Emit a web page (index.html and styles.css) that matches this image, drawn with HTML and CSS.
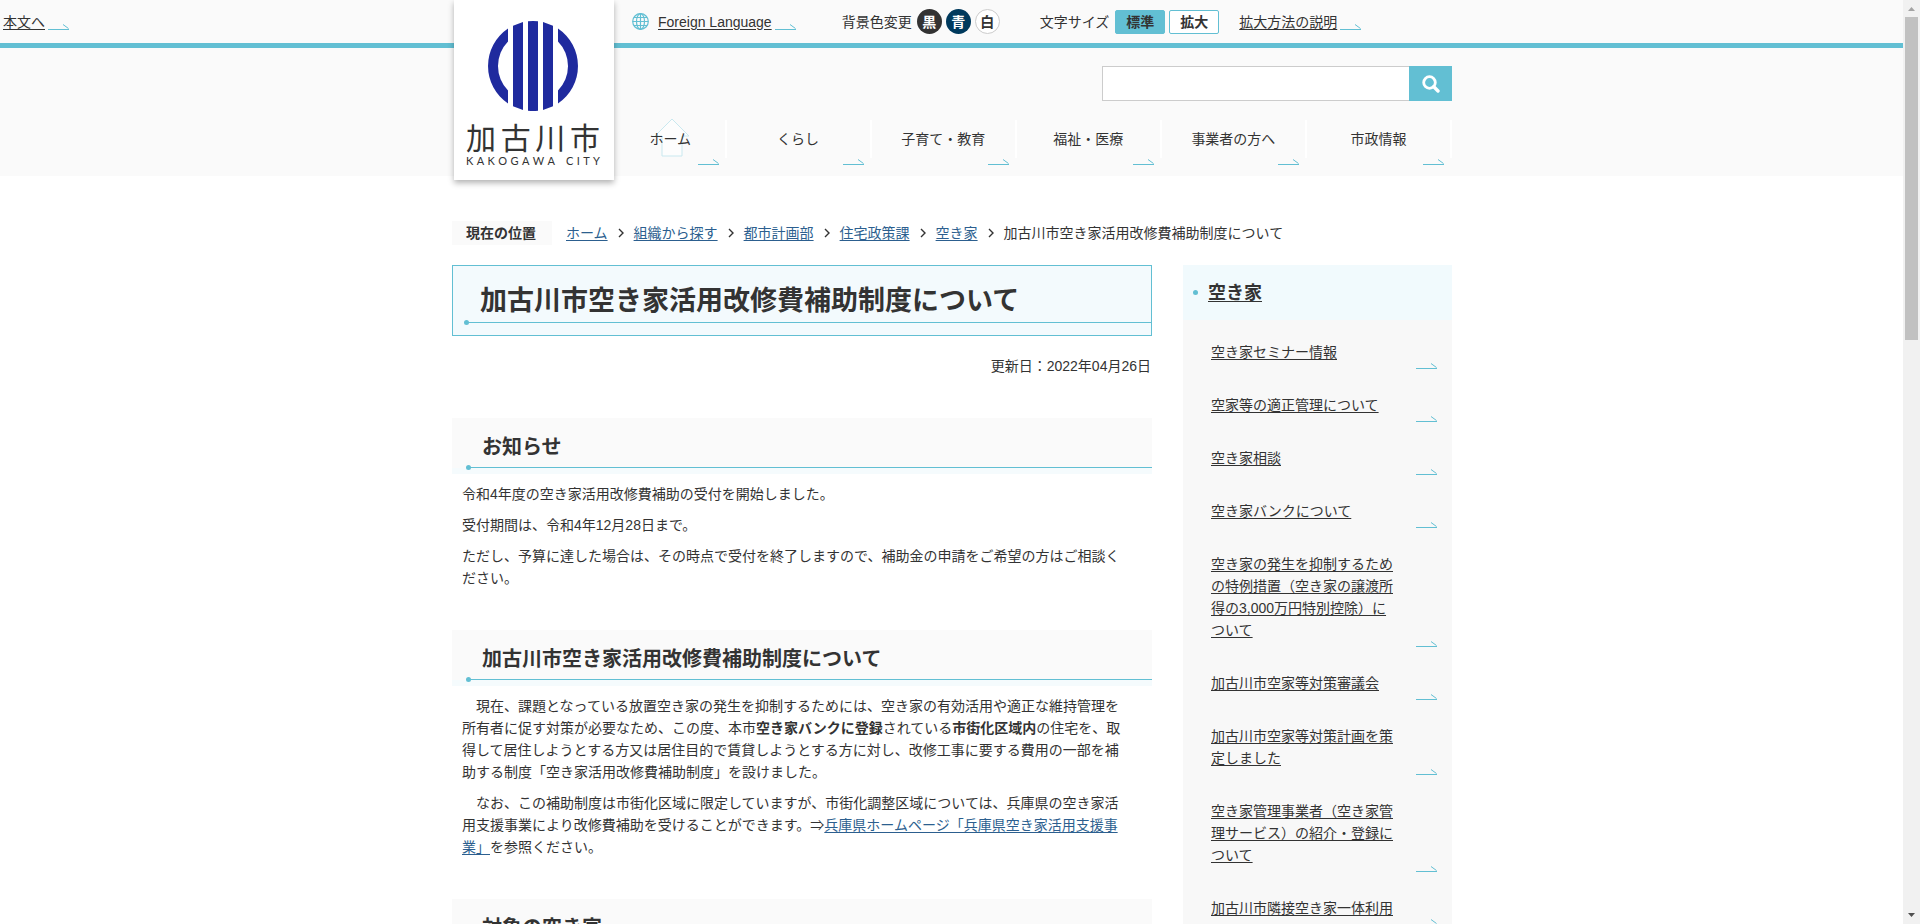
FILE: index.html
```html
<!DOCTYPE html>
<html lang="ja">
<head>
<meta charset="utf-8">
<title>加古川市空き家活用改修費補助制度について</title>
<link rel="stylesheet" href="styles.css">
</head>
<body>
<svg class="defs" aria-hidden="true">
  <symbol id="arrow" viewBox="0 0 21 6"><path d="M0 5.5H21M15 .5L20.5 4.5" fill="none" stroke="#62bfd3"/></symbol>
  <symbol id="chevron" viewBox="0 0 6 10"><path d="M1 1L5 5L1 9" fill="none" stroke="#333" stroke-width="1.4"/></symbol>
</svg>

<header class="header">
  <div class="topbar">
    <a class="skip tool-link" href="#main">本文へ<svg class="arrow"><use href="#arrow"/></svg></a>
    <div class="tools">
      <div class="tool-group language">
        <svg class="globe" viewBox="0 0 17 17" fill="none" stroke="#62bfd3" stroke-width="1.2"><circle cx="8.5" cy="8.5" r="7.8"/><ellipse cx="8.5" cy="8.5" rx="4" ry="7.8"/><path d="M8.5 .7V16.3M.7 8.5H16.3M2 4.5H15M2 12.5H15"/></svg>
        <a class="tool-link" href="#language"><span>Foreign Language</span><svg class="arrow"><use href="#arrow"/></svg></a>
      </div>
      <div class="tool-group background">
        <span class="tool-label">背景色変更</span>
        <div class="button-row">
          <button class="round black" type="button">黒</button>
          <button class="round blue" type="button">青</button>
          <button class="round white" type="button">白</button>
        </div>
      </div>
      <div class="tool-group size">
        <span class="tool-label">文字サイズ</span>
        <div class="button-row">
          <button class="size-button current" type="button">標準</button>
          <button class="size-button" type="button">拡大</button>
        </div>
      </div>
      <a class="tool-link" href="#zoom-help"><span>拡大方法の説明</span><svg class="arrow"><use href="#arrow"/></svg></a>
    </div>
  </div>

  <div class="container masthead">
    <a class="logo" href="#home" aria-label="加古川市">
      <svg class="emblem" viewBox="0 0 90 90" fill="#1f2a9e">
        <path d="M20 7.6A45 45 0 0 0 20 82.4V69.5A35 35 0 0 1 20 20.5Z"/>
        <path d="M70 7.6A45 45 0 0 1 70 82.4V69.5A35 35 0 0 0 70 20.5Z"/>
        <path d="M25 4.7L35 1.1V88.9L25 85.3ZM40 .3Q45 -.2 50 .3V89.7Q45 90.2 40 89.7ZM55 1.1L65 4.7V85.3L55 88.9Z"/>
      </svg>
      <span class="city"><span>加</span><span>古</span><span>川</span><span>市</span></span>
      <span class="romaji"><span>K</span><span>A</span><span>K</span><span>O</span><span>G</span><span>A</span><span>W</span><span>A</span><span class="space"></span><span>C</span><span>I</span><span>T</span><span>Y</span></span>
    </a>
    <form class="search">
      <input class="search-box" type="text" aria-label="サイト内検索">
      <button class="search-button" type="button" aria-label="検索"><svg viewBox="0 0 18 18" fill="none" stroke="#fff"><circle cx="7.5" cy="7.5" r="5.8" stroke-width="2.8"/><path d="M11.8 11.8L16 16" stroke-width="3.4" stroke-linecap="round"/></svg></button>
    </form>
    <nav class="nav">
      <a class="nav-item home" href="#home"><svg class="house" viewBox="0 0 38 39"><path d="M19 1L36 18H29V38H9V18H2Z" fill="#fdfdfd" stroke="#c9e8ef"/></svg><span>ホーム</span><svg class="arrow"><use href="#arrow"/></svg></a>
      <a class="nav-item" href="#life"><span>くらし</span><svg class="arrow"><use href="#arrow"/></svg></a>
      <a class="nav-item" href="#children"><span>子育て・教育</span><svg class="arrow"><use href="#arrow"/></svg></a>
      <a class="nav-item" href="#welfare"><span>福祉・医療</span><svg class="arrow"><use href="#arrow"/></svg></a>
      <a class="nav-item" href="#business"><span>事業者の方へ</span><svg class="arrow"><use href="#arrow"/></svg></a>
      <a class="nav-item" href="#government"><span>市政情報</span><svg class="arrow"><use href="#arrow"/></svg></a>
    </nav>
  </div>
</header>

<div class="container">
  <nav class="breadcrumb" aria-label="現在の位置">
    <strong class="breadcrumb-label">現在の位置</strong>
    <ol class="crumbs">
      <li><a href="#home">ホーム</a><svg class="chevron"><use href="#chevron"/></svg></li>
      <li><a href="#organization">組織から探す</a><svg class="chevron"><use href="#chevron"/></svg></li>
      <li><a href="#city-planning">都市計画部</a><svg class="chevron"><use href="#chevron"/></svg></li>
      <li><a href="#housing">住宅政策課</a><svg class="chevron"><use href="#chevron"/></svg></li>
      <li><a href="#akiya">空き家</a><svg class="chevron"><use href="#chevron"/></svg></li>
      <li>加古川市空き家活用改修費補助制度について</li>
    </ol>
  </nav>

  <div class="columns">
    <main class="main" id="main">
      <h1 class="title"><span>加古川市空き家活用改修費補助制度について</span></h1>
      <p class="updated">更新日：2022年04月26日</p>

      <section class="section">
        <h2 class="heading"><span>お知らせ</span></h2>
        <p>令和4年度の空き家活用改修費補助の受付を開始しました。</p>
        <p>受付期間は、令和4年12月28日まで。</p>
        <p>ただし、予算に達した場合は、その時点で受付を終了しますので、補助金の申請をご希望の方はご相談ください。</p>
      </section>

      <section class="section">
        <h2 class="heading"><span>加古川市空き家活用改修費補助制度について</span></h2>
        <p>　現在、課題となっている放置空き家の発生を抑制するためには、空き家の有効活用や適正な維持管理を所有者に促す対策が必要なため、この度、本市<strong>空き家バンクに登録</strong>されている<strong>市街化区域内</strong>の住宅を、取得して居住しようとする方又は居住目的で賃貸しようとする方に対し、改修工事に要する費用の一部を補助する制度「空き家活用改修費補助制度」を設けました。</p>
        <p>　なお、この補助制度は市街化区域に限定していますが、市街化調整区域については、兵庫県の空き家活用支援事業により改修費補助を受けることができます。⇒<a href="#hyogo">兵庫県ホームページ「兵庫県空き家活用支援事業」</a>を参照ください。</p>
      </section>

      <section class="section">
        <h2 class="heading"><span>対象の空き家</span></h2>
      </section>
    </main>

    <aside class="side">
      <h2 class="side-title"><a href="#akiya">空き家</a></h2>
      <ul class="side-list">
        <li><a href="#s1">空き家セミナー情報</a><svg class="arrow"><use href="#arrow"/></svg></li>
        <li><a href="#s2">空家等の適正管理について</a><svg class="arrow"><use href="#arrow"/></svg></li>
        <li><a href="#s3">空き家相談</a><svg class="arrow"><use href="#arrow"/></svg></li>
        <li><a href="#s4">空き家バンクについて</a><svg class="arrow"><use href="#arrow"/></svg></li>
        <li><a href="#s5">空き家の発生を抑制するための特例措置（空き家の譲渡所得の3,000万円特別控除）について</a><svg class="arrow"><use href="#arrow"/></svg></li>
        <li><a href="#s6">加古川市空家等対策審議会</a><svg class="arrow"><use href="#arrow"/></svg></li>
        <li><a href="#s7">加古川市空家等対策計画を策定しました</a><svg class="arrow"><use href="#arrow"/></svg></li>
        <li><a href="#s8">空き家管理事業者（空き家管理サービス）の紹介・登録について</a><svg class="arrow"><use href="#arrow"/></svg></li>
        <li><a href="#s9">加古川市隣接空き家一体利用</a><svg class="arrow"><use href="#arrow"/></svg></li>
      </ul>
    </aside>
  </div>
</div>

<div class="scrollbar" aria-hidden="true">
  <svg viewBox="0 0 17 17"><path d="M5 11L8.5 7L12 11Z" fill="#a3a3a3"/></svg>
  <div class="thumb"></div>
  <svg class="down" viewBox="0 0 17 17"><path d="M5 6L8.5 10L12 6Z" fill="#505050"/></svg>
</div>
</body>
</html>
```

FILE: styles.css
```css
* { box-sizing: border-box; }

body {
  margin: 0;
  padding-right: 16px;
  height: 100vh;
  overflow: hidden;
  background: #fff;
  color: #333;
  font-family: "Liberation Sans", "Noto Sans CJK JP", sans-serif;
  font-size: 14px;
  line-height: 22px;
  text-spacing-trim: space-all;
}

a { color: #333; text-underline-offset: 2px; }
p, h1, h2, ul, ol { margin: 0; padding: 0; }
ul, ol { list-style: none; }
button, input { font: inherit; color: inherit; padding: 0; }

.defs { position: absolute; width: 0; height: 0; }
.arrow { display: block; flex: none; width: 21px; height: 6px; }
.container { max-width: 1000px; margin: 0 auto; }

/* Header */
.header { background: #fafafa; }

.topbar {
  display: grid;
  grid-template-columns: 1fr minmax(0, 1000px) 1fr;
  align-items: center;
  height: 48px;
  border-bottom: 5px solid #62bfd3;
}

.tools, .tool-group, .button-row { display: flex; align-items: center; }
.tools { padding-left: 180px; white-space: nowrap; }
.tool-link { display: flex; align-items: center; gap: 3px; }
.tool-link .arrow { align-self: flex-end; margin-bottom: 3px; }
.skip { padding-left: 3px; }
.language { gap: 9px; margin-right: 46px; }
.globe { width: 17px; height: 17px; }
.background { gap: 5px; margin-right: 40px; }
.size { gap: 6px; margin-right: 20px; }
.button-row { gap: 4px; }

.round {
  width: 25px;
  height: 25px;
  border: 1px solid transparent;
  border-radius: 50%;
  font-weight: bold;
  line-height: 22px;
}
.black { background: #333; color: #fff; }
.blue { background: #003a5d; color: #fff; }
.white { background: #fff; border-color: #ccc; }

.size-button {
  width: 50px;
  height: 24px;
  border: 1px solid #62bfd3;
  border-radius: 2px;
  background: #fff;
  font-weight: bold;
  line-height: 22px;
}
.current { background: #62bfd3; }

.masthead { position: relative; height: 128px; padding-top: 18px; }

.logo {
  position: absolute;
  top: -48px;
  left: 2px;
  display: flex;
  flex-direction: column;
  width: 160px;
  height: 180px;
  padding: 21px 14px 0 12px;
  background: #fff;
  box-shadow: 0 3px 6px rgba(0, 0, 0, .3);
  text-decoration: none;
}
.emblem { width: 90px; height: 90px; margin: 0 auto 12px; }
.city, .romaji { display: flex; justify-content: space-between; }
.city { font-size: 30px; line-height: 32px; }
.romaji { font-family: Lato, sans-serif; font-size: 11px; line-height: 12px; }
.space { width: 4px; }

.search { display: flex; justify-content: flex-end; }
.search-box {
  width: 307px;
  height: 35px;
  padding: 0 8px;
  border: 1px solid #ccc;
  border-right: 0;
  background: #fff;
}
.search-button {
  display: grid;
  place-items: center;
  width: 43px;
  height: 35px;
  border: 0;
  background: #62bfd3;
}
.search-button svg { width: 18px; height: 18px; }

.nav { display: flex; margin: 19px 0 0 164px; }
.nav-item {
  position: relative;
  flex: 145;
  height: 38px;
  border-right: 2px solid #fff;
  line-height: 38px;
  text-align: center;
  text-decoration: none;
}
.nav-item span { position: relative; }
.nav-item .arrow { position: absolute; right: 6px; bottom: -7px; }
.home { flex: 110; }
.house { position: absolute; top: -2px; left: 50%; width: 38px; height: 39px; margin-left: -17px; }

/* Breadcrumb */
.breadcrumb { display: flex; gap: 14px; margin: 45px 0 20px; line-height: 24px; }
.breadcrumb-label { width: 100px; background: #fafafa; padding-left: 14px; }
.crumbs { display: flex; }
.crumbs li { display: flex; align-items: center; }
.crumbs a, .section a { color: #2c5f8f; }
.chevron { width: 6px; height: 10px; margin: 0 10px; }

/* Columns */
.columns {
  display: grid;
  grid-template-columns: minmax(0, 1fr) 269px;
  gap: 31px;
  align-items: start;
}

.title {
  height: 71px;
  padding-left: 13px;
  border: 1px solid #62bfd3;
  background: #f3fafd;
  font-size: 27px;
  line-height: 34px;
}
.title span, .heading span { position: relative; display: block; border-bottom: 1px solid #62bfd3; }
.title span { padding: 18px 14px 4px; }
.title span::after, .heading span::after {
  content: "";
  position: absolute;
  bottom: -3px;
  left: -2px;
  width: 5px;
  height: 5px;
  border-radius: 50%;
  background: #62bfd3;
}
.updated { margin: 19px 1px 41px; text-align: right; }

.section { margin-bottom: 41px; }
.section p { margin: 9px 26px 0 10px; }
.heading {
  padding: 0 0 6px 16px;
  background: linear-gradient(to top, #f5fbfd 6px, #fafafa 6px);
  font-size: 20px;
  line-height: 30px;
}
.heading span { padding: 14px 14px 5px; }

/* Sidebar */
.side { background: #f8f8f8; }
.side-title {
  display: flex;
  align-items: center;
  gap: 10px;
  height: 55px;
  padding-left: 10px;
  background: #f1fafd;
  font-size: 18px;
}
.side-title::before {
  content: "";
  width: 5px;
  height: 5px;
  border-radius: 50%;
  background: #62bfd3;
}
.side-list { padding: 21px 15px 0 28px; }
.side-list li { display: flex; flex-direction: column; align-items: flex-start; padding-bottom: 25px; }
.side-list a { max-width: 186px; }
.side-list .arrow { align-self: flex-end; }

/* Scrollbar */
.scrollbar {
  position: fixed;
  top: 0;
  right: 0;
  bottom: 0;
  display: flex;
  flex-direction: column;
  width: 17px;
  background: #f1f1f1;
}
.scrollbar svg { flex: none; width: 17px; height: 17px; }
.thumb { flex: none; height: 35%; margin: 0 2px; background: #c1c1c1; }
.scrollbar .down { margin-top: auto; }
```
